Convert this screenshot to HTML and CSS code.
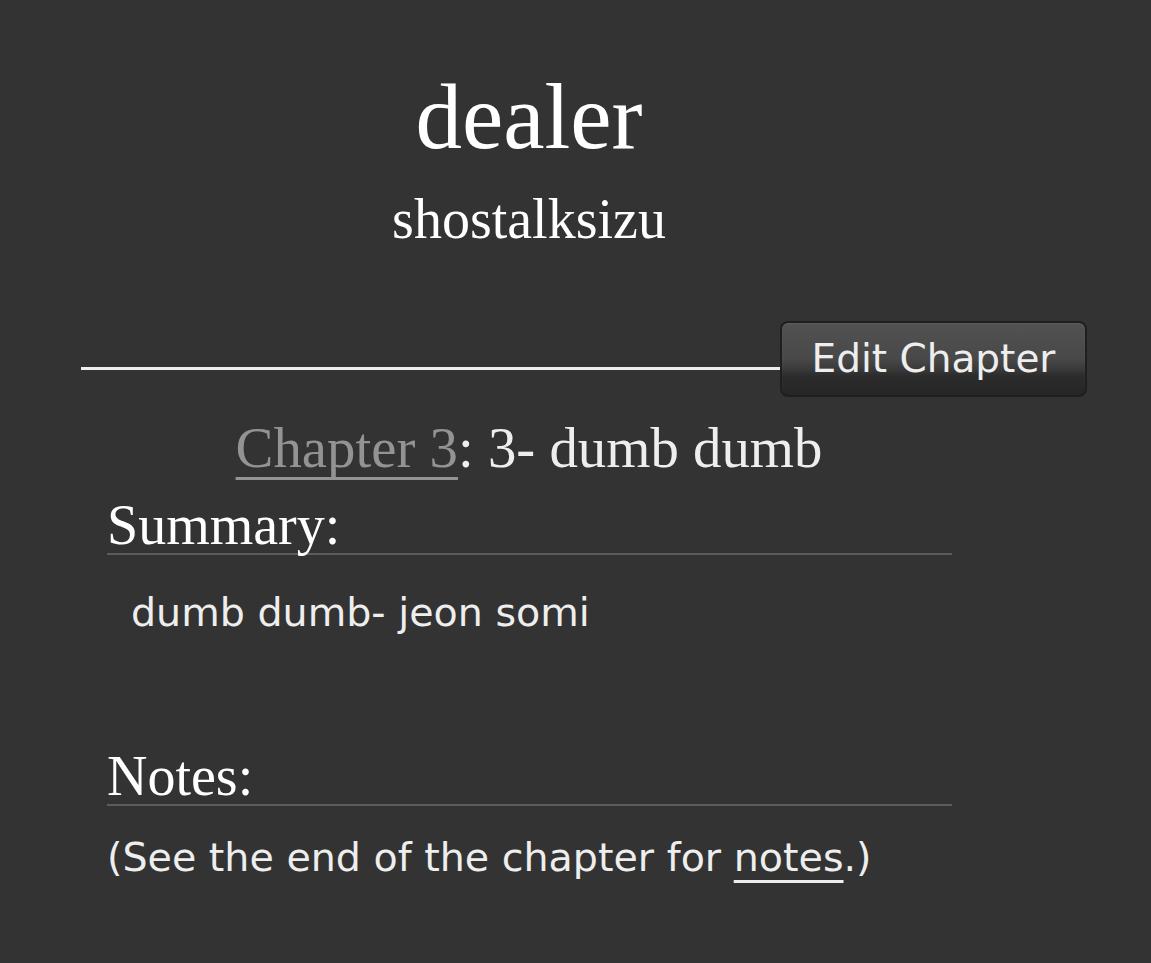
FILE: index.html
```html
<!DOCTYPE html>
<html lang="en">
<head>
<meta charset="utf-8">
<title>dealer - shostalksizu</title>
<link rel="stylesheet" href="styles.css">
</head>
<body>
<div class="work">
  <div class="preface">
    <h2 class="title">dealer</h2>
    <h3 class="byline">shostalksizu</h3>
  </div>

  <div class="chapter-nav">
    <div class="rule"></div>
    <a class="button" href="#">Edit Chapter</a>
  </div>

  <h3 class="chapter-title"><a href="#" class="chapter-link">Chapter 3</a>: 3- dumb dumb</h3>

  <div class="module summary">
    <h3 class="heading">Summary:</h3>
    <blockquote class="userstuff">dumb dumb- jeon somi</blockquote>
  </div>

  <div class="module notes">
    <h3 class="heading">Notes:</h3>
    <p class="jump">(See the end of the chapter for <a href="#" class="notes-link">notes</a>.)</p>
  </div>
</div>
</body>
</html>
```

FILE: styles.css
```css
html, body {
  margin: 0;
  padding: 0;
  background: #333333;
  color: #eeeeee;
}

body {
  font-family: "DejaVu Sans", Verdana, sans-serif;
  font-size: 39.6px;
}

.work {
  padding-left: 81px;
  padding-top: 61px;
}

.preface {
  width: 896px;
  text-align: center;
}

.title,
.byline,
.chapter-title,
.heading {
  font-family: "Liberation Serif", Georgia, serif;
  font-weight: normal;
  margin: 0;
  color: #ffffff;
}

.title {
  font-size: 93px;
  line-height: 112px;
}

.byline {
  font-size: 56px;
  line-height: 68px;
  margin-top: 12px;
}

/* rule with the edit button sitting at its right end */
.chapter-nav {
  display: flex;
  align-items: flex-end;
  width: 1006px;
  margin-top: 68px;
}

.rule {
  flex: 1;
  height: 3px;
  background: #eeeeee;
  margin-bottom: 27px;
}

.button {
  box-sizing: border-box;
  width: 307px;
  height: 76px;
  display: flex;
  align-items: center;
  justify-content: center;
  border: 2px solid #1f1f1f;
  border-radius: 8px;
  background: linear-gradient(to bottom, #525252 0%, #484848 50%, #3a3a3a 64%, #2b2b2b 74%, #262626 100%);
  box-shadow: inset 0 1px 2px rgba(255, 255, 255, 0.08);
  color: #eeeeee;
  text-decoration: none;
  font-size: 39px;
  padding-bottom: 2px;
}

.chapter-title {
  width: 896px;
  text-align: center;
  font-size: 56.8px;
  line-height: 68px;
  margin-top: 17px;
  color: #eeeeee;
}

.chapter-link {
  color: #939393;
  text-decoration: underline;
  text-decoration-thickness: 3px;
  text-underline-offset: 10px;
  text-decoration-skip-ink: none;
}

.module {
  width: 845px;
  margin-left: 26px;
}

.heading {
  font-size: 56px;
  line-height: 55px;
  border-bottom: 2px solid #5c5c5c;
}

.summary {
  margin-top: 16px;
}

.userstuff {
  margin: 30px 0 0 24px;
  line-height: 55px;
}

.notes {
  margin-top: 109px;
}

.jump {
  margin: 24px 0 0 0;
  line-height: 55px;
}

.notes-link {
  color: #eeeeee;
  text-decoration: underline;
  text-decoration-thickness: 3px;
  text-underline-offset: 9px;
  text-decoration-skip-ink: none;
}
```
